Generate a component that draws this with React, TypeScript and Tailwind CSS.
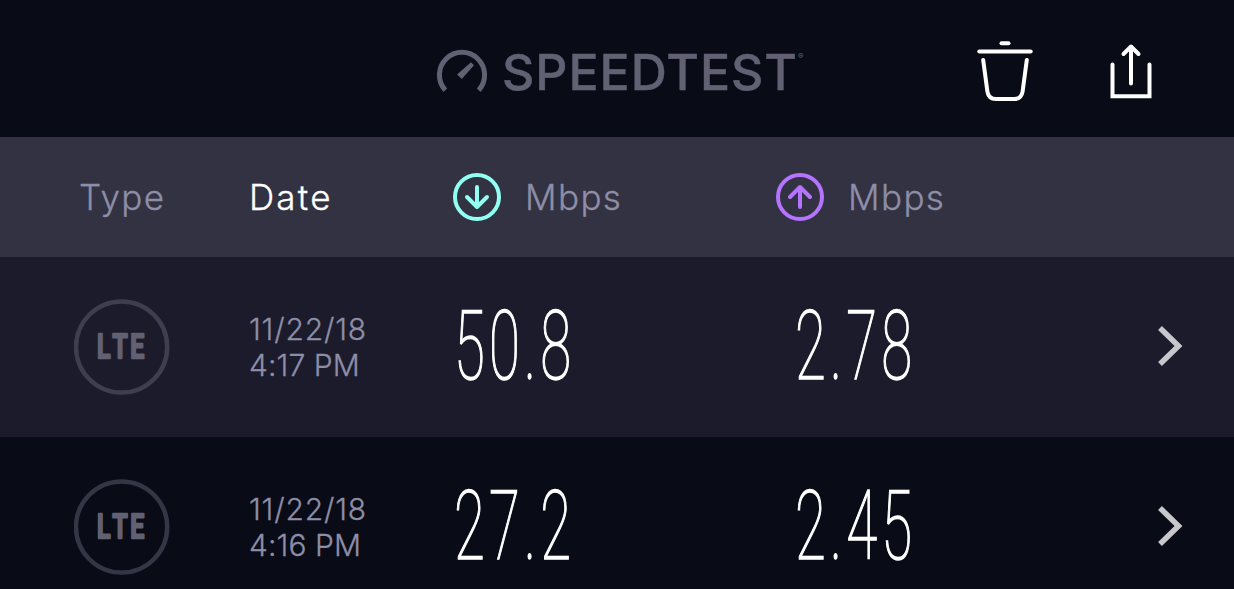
import React from 'react';

interface TestResult {
  id: number;
  type: string;
  date: string;
  time: string;
  download: string;
  upload: string;
}

const results: TestResult[] = [
  { id: 1, type: 'LTE', date: '11/22/18', time: '4:17 PM', download: '50.8', upload: '2.78' },
  { id: 2, type: 'LTE', date: '11/22/18', time: '4:16 PM', download: '27.2', upload: '2.45' }
];

function GaugeIcon() {
  return (
    <svg width="52" height="46" viewBox="0 0 52 46" fill="none" className="mt-[6px] shrink-0">
      <path d="M9.3 41.2A22.6 22.6 0 1 1 42.7 41.2" stroke="#616173" strokeWidth="5" />
      <path d="M35 13.2L38 16.2L25.8 30L21 25.4Z" fill="#616173" />
    </svg>
  );
}

function TrashIcon() {
  return (
    <svg width="56" height="62" viewBox="0 0 56 62" fill="none" stroke="white" strokeWidth="4" strokeLinecap="round">
      <path d="M24.5 3.2H31.5" />
      <path d="M2.3 11.4H53.7" />
      <path d="M6.2 20L10.4 51.5Q11.5 59 19 59H37Q44.5 59 45.6 51.5L49.8 20" />
    </svg>
  );
}

function ShareIcon() {
  return (
    <svg width="44" height="56" viewBox="0 0 44 56" fill="none" stroke="white" strokeWidth="4" strokeLinecap="round">
      <path d="M3.5 21.5V53.2H40.5V21.5" />
      <path d="M22 40.5V3.5M14.5 11L22 3.5L29.5 11" strokeLinejoin="round" />
    </svg>
  );
}

function ArrowCircle({ color, up }: { color: string; up?: boolean }) {
  return (
    <svg width="48" height="48" viewBox="0 0 48 48" fill="none" stroke={color} strokeWidth="4" strokeLinecap="round" strokeLinejoin="round">
      <circle cx="24" cy="24" r="22" />
      {up ? <path d="M24 34V14M14 24L24 14L34 24" /> : <path d="M24 14V34M14 24L24 34L34 24" />}
    </svg>
  );
}

function TypeBadge({ label }: { label: string }) {
  return (
    <svg width="96" height="96" viewBox="0 0 96 96">
      <circle cx="47.6" cy="48" r="45.6" fill="none" stroke="#616173" strokeOpacity="0.5" strokeWidth="4.5" />
      <text
        x="30.8 51.2 75"
        y="59.4"
        transform="scale(0.75 1)"
        fill="#616173"
        stroke="#616173"
        strokeWidth="2.6"
        strokeLinejoin="round"
        className="font-['Roboto',sans-serif] text-[33px] font-medium"
      >
        {label}
      </text>
    </svg>
  );
}

function Speed({ value }: { value: string }) {
  return (
    <span className="mb-[2px] block origin-left scale-x-[0.59] font-['Roboto',sans-serif] text-[95.5px] leading-[178px] font-thin tracking-[7px] whitespace-nowrap text-white [-webkit-text-stroke:1.5px]">
      {value}
    </span>
  );
}

export default function App() {
  return (
    <div className="h-[589px] w-[1234px] overflow-hidden bg-[#090b17] font-['Inter',sans-serif]">
      <header className="flex h-[137px] items-center pr-[81px]">
        <div className="ml-[436px] flex w-[541px] items-center gap-[14px]">
          <GaugeIcon />
          <h1 className="mt-[7px] flex items-start text-[50px] leading-none font-medium tracking-[1px] text-[#616173] [-webkit-text-stroke:0.4px]">
            SPEEDTEST
            <span className="mt-[5px] text-[8px] leading-none tracking-normal [-webkit-text-stroke:0px]">®</span>
          </h1>
        </div>
        <button className="mt-1">
          <TrashIcon />
        </button>
        <button className="mt-1 ml-[76px]">
          <ShareIcon />
        </button>
      </header>

      <div className="grid h-[120px] grid-cols-[175px_204px_323px_1fr] items-center bg-[#323243] pl-[74px] text-[35px] font-light tracking-[1.4px] text-[#8e8ea6] [-webkit-text-stroke:0.3px]">
        <span className="pl-[5px]">Type</span>
        <span className="tracking-[2.2px] text-white">Date</span>
        <div className="flex items-center gap-[24px]">
          <ArrowCircle color="#91fff1" />
          <span>Mbps</span>
        </div>
        <div className="flex items-center gap-[24px]">
          <ArrowCircle color="#b574ff" up />
          <span>Mbps</span>
        </div>
      </div>

      <ul>
        {results.map((result) => (
          <li
            key={result.id}
            className="grid h-[180px] grid-cols-[175px_205px_341px_363px_1fr] items-center pl-[74px] odd:bg-[#1b1b2c] even:bg-[#090b17]"
          >
            <TypeBadge label={result.type} />
            <div className="mb-px text-[30px] leading-9 font-light text-[#8e8ea6] [-webkit-text-stroke:0.3px]">
              <p className="tracking-[0.8px]">{result.date}</p>
              <p className="tracking-[0.1px]">{result.time}</p>
            </div>
            <Speed value={result.download} />
            <Speed value={result.upload} />
            <svg width="26" height="42" viewBox="0 0 26 42" fill="none" stroke="#c7c7cc" strokeWidth="5.5" className="mb-[3px]">
              <path d="M2 3L20.5 21L2 39" />
            </svg>
          </li>
        ))}
      </ul>
    </div>
  );
}
